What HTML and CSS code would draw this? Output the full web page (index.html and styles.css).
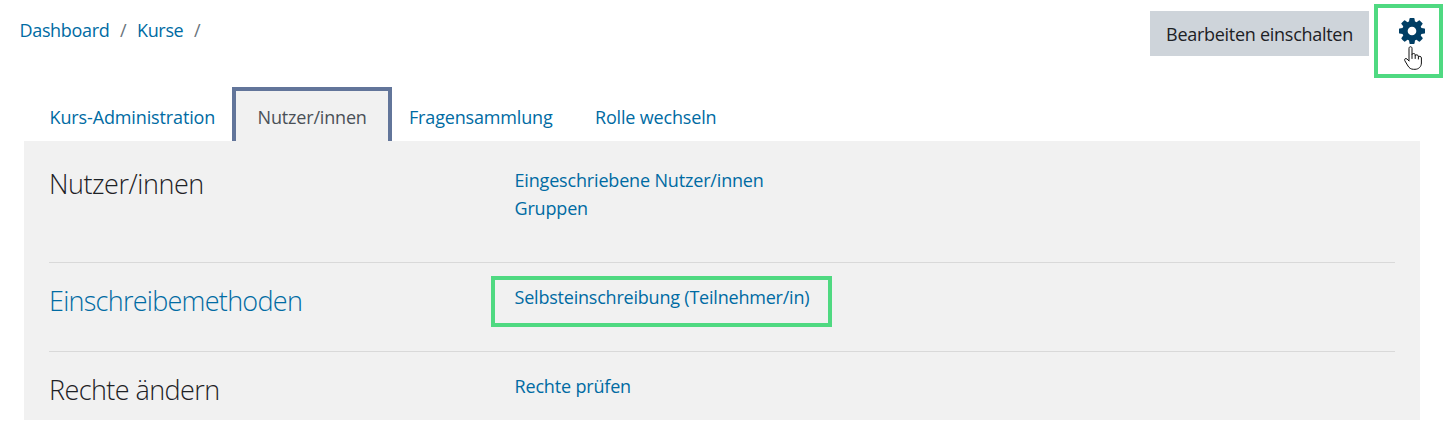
FILE: index.html
```html
<!DOCTYPE html>
<html lang="de">
<head>
  <meta charset="UTF-8" />
  <meta name="viewport" content="width=device-width, initial-scale=1" />
  <title>Kurs-Administration</title>
  <link rel="stylesheet" href="styles.css">
</head>
<body>
  <header class="page-header">
    <nav class="breadcrumb">
      <a href="#">Dashboard</a>
      <span class="sep">/</span>
      <a href="#">Kurse</a>
      <span class="sep">/</span>
    </nav>
    <div class="header-actions">
      <button class="btn-edit">Bearbeiten einschalten</button>
      <div class="settings highlight">
        <svg class="gear" viewBox="128 128 1536 1536"><path fill="currentColor" d="M1152 896q0-106-75-181t-181-75-181 75-75 181 75 181 181 75 181-75 75-181zm512-109v222q0 12-8 23t-20 13l-185 28q-19 54-39 91 35 50 107 138 10 12 10 25t-9 23q-27 37-99 108t-94 71q-12 0-26-9l-138-108q-44 23-91 38-16 136-29 186-7 28-36 28h-222q-14 0-24.500-8.500t-11.500-21.500l-28-184q-49-16-90-37l-141 107q-10 9-25 9-14 0-25-11-126-114-165-168-7-10-7-23 0-12 8-23 15-21 51-66.500t54-70.500q-27-50-41-99l-183-27q-13-2-21-12.500t-8-23.500v-222q0-12 8-23t19-13l186-28q14-46 39-92-40-57-107-138-10-12-10-24 0-10 9-23 26-36 98.500-107.500t94.500-71.500q13 0 26 10l138 107q44-23 91-38 16-136 29-186 7-28 36-28h222q14 0 24.500 8.500t11.500 21.500l28 184q49 16 90 37l142-107q9-9 24-9 13 0 25 10 129 119 165 170 7 8 7 22 0 12-8 23-15 21-51 66.500t-54 70.500q26 50 41 98l183 28q13 2 21 12.500t8 23.500z"/></svg>
        <svg class="cursor" viewBox="0 0 18 24"><path fill="#fff" stroke="#111" stroke-width="1" stroke-linejoin="round" stroke-linecap="round" d="M5 14.500V2.300C5 .2 8 .2 8 2.300V8.500C8 7.200 11.200 7.200 11.200 8.700V9.500C11.500 8.400 14.400 8.700 14.400 10.200V10.800C14.900 9.900 17.400 10.200 17.400 11.900V17C17.400 20.500 14.800 23.300 11 23.300H9.500C7 23.300 5.200 22 4 20L.8 14.700C0 13 1.700 11.800 3 13L5 15M8 8.500V12.500M11.200 9.500V12.500M14.400 10.800V13"/></svg>
      </div>
    </div>
  </header>

  <main class="admin">
    <ul class="tabs">
      <li><a class="tab t-admin" href="#">Kurs-Administration</a></li>
      <li><a class="tab t-users active" href="#">Nutzer/innen</a></li>
      <li><a class="tab t-questions" href="#">Fragensammlung</a></li>
      <li><a class="tab t-role" href="#">Rolle wechseln</a></li>
    </ul>

    <div class="tab-content">
      <section class="row row-users">
        <h2>Nutzer/innen</h2>
        <ul class="links">
          <li><a href="#">Eingeschriebene Nutzer/innen</a></li>
          <li><a href="#">Gruppen</a></li>
        </ul>
      </section>
      <section class="row row-enrol">
        <h2><a href="#">Einschreibemethoden</a></h2>
        <ul class="links highlight">
          <li><a href="#">Selbsteinschreibung (Teilnehmer/in)</a></li>
        </ul>
      </section>
      <section class="row row-rights">
        <h2>Rechte ändern</h2>
        <ul class="links">
          <li><a href="#">Rechte prüfen</a></li>
        </ul>
      </section>
    </div>
  </main>
</body>
</html>
```
FILE: styles.css
```css
* {
  box-sizing: border-box;
}

body {
  margin: 0;
  background: #fff;
  color: #1d2125;
  font-family: "Segoe UI", "Open Sans", "Noto Sans", sans-serif;
  font-size: 18px;
  line-height: 28px;
  letter-spacing: -0.17px;
}

a {
  color: #006ba3;
  text-decoration: none;
}

ul {
  list-style: none;
  margin: 0;
  padding: 0;
}

.page-header {
  display: flex;
  justify-content: space-between;
  height: 87px;
  padding: 4px 2px 0 19.5px;
}

.breadcrumb {
  display: flex;
  gap: 10.7px;
  padding-top: 12px;
  letter-spacing: -0.34px;
}

.sep {
  color: #6a737b;
}

.header-actions {
  display: flex;
  gap: 5px;
}

.btn-edit {
  width: 219px;
  height: 45px;
  margin-top: 7px;
  padding: 0;
  border: 0;
  background: #ced4da;
  color: #1d2125;
  font: inherit;
  letter-spacing: -0.28px;
  white-space: nowrap;
}

.highlight {
  border: 4px solid #4fd981;
}

.settings {
  position: relative;
  width: 69px;
  height: 74px;
  padding: 10px 0 0 21px;
}

.gear {
  display: block;
  width: 26px;
  height: 26px;
  color: #003e64;
}

.cursor {
  position: absolute;
  left: 26px;
  top: 38px;
  width: 18px;
  height: 24px;
}

.admin {
  margin: 0 25px 0 24px;
}

.tabs {
  display: flex;
  height: 54px;
}

.tab {
  display: block;
  height: 54px;
  padding-top: 16px;
  white-space: nowrap;
}

.t-admin {
  width: 208px;
  padding-left: 25.5px;
  letter-spacing: -0.13px;
}

.t-users {
  width: 160px;
}

.t-questions {
  width: 186px;
  padding-left: 17px;
}

.t-role {
  padding-left: 17px;
}

.tab.active {
  padding: 12px 0 0 21.5px;
  border: 4px solid #62759a;
  border-bottom: 0;
  background: #f1f1f1;
  color: #495057;
}

.tab-content {
  height: 279px;
  padding: 0 25px;
  background: #f1f1f1;
}

.row {
  display: grid;
  grid-template-columns: 442px 341px;
}

.row + .row {
  border-top: 1px solid #d9d9d9;
}

.row h2 {
  margin: 0;
  font-size: 27px;
  font-weight: 300;
  line-height: 36px;
  letter-spacing: -0.45px;
  white-space: nowrap;
}

.links {
  padding-left: 23.5px;
  white-space: nowrap;
}

.row-users {
  height: 121px;
  padding-top: 25px;
}

.row-enrol {
  height: 89px;
  padding-top: 13px;
}

.row-enrol h2 {
  padding-top: 7px;
  letter-spacing: -0.73px;
}

.row-enrol .links {
  height: 51px;
  padding: 3px 0 0 19.5px;
  letter-spacing: -0.21px;
}

.row-rights {
  padding-top: 20px;
}

.row-rights h2 {
  letter-spacing: -0.58px;
}
```
